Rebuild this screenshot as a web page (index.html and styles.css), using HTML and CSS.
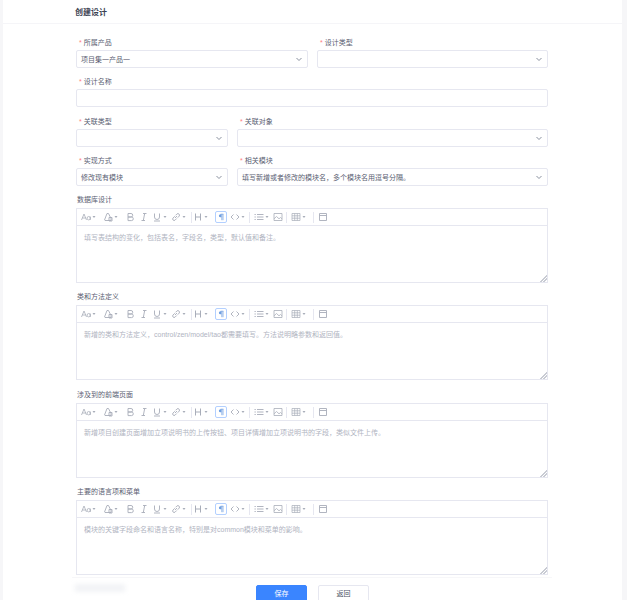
FILE: index.html
```html
<!DOCTYPE html>
<html lang="zh-CN">
<head>
    <meta charset="UTF-8">
    <meta name="viewport" content="width=device-width, initial-scale=1.0">
    <title>创建设计</title>
    <link rel="stylesheet" href="styles.css">
</head>
<body>
    <svg class="icon-defs" width="0" height="0">
        <symbol id="i-chevron" viewBox="0 0 8 8"><path d="M1.500 3 4 5.500 6.500 3" fill="none" stroke="currentColor" stroke-width=".9"/></symbol>
        <symbol id="i-caret" viewBox="0 0 6 6"><path d="M1.500 2 4.500 2 3 4Z" fill="currentColor"/></symbol>
        <symbol id="i-font" viewBox="0 0 10 10"><path d="M.5 8 3 2 5.500 8M1.400 6H4.600M9.300 4.500V8M9.300 6.200a1.600 1.700 0 1 1-3.200 0 1.600 1.700 0 1 1 3.200 0" fill="none" stroke="currentColor" stroke-width=".8"/></symbol>
        <symbol id="i-color" viewBox="0 0 10 10"><path d="M1.500 8 4 1.500h1.500L8 6.500V8.500H2ZM6 5.500h3v3.500H6Z" fill="none" stroke="currentColor" stroke-width=".9"/></symbol>
        <symbol id="i-bold" viewBox="0 0 10 10"><path d="M3 1.500H6a1.700 1.700 0 0 1 0 3.500H3ZM3 5H6.500a1.800 1.800 0 0 1 0 3.600H3Z" fill="none" stroke="currentColor" stroke-width=".9"/></symbol>
        <symbol id="i-italic" viewBox="0 0 10 10"><path d="M4 1.500H7.500M2.500 8.500H6M5.700 1.500 4.300 8.500" fill="none" stroke="currentColor" stroke-width=".9"/></symbol>
        <symbol id="i-under" viewBox="0 0 10 10"><path d="M2.500 1.500V5a2.500 2.500 0 0 0 5 0V1.500M2 9H8" fill="none" stroke="currentColor" stroke-width=".9"/></symbol>
        <symbol id="i-link" viewBox="0 0 10 10"><path d="M4 6 6 4M3.800 4.300 2 6a1.500 1.500 0 0 0 2 2.200L5.700 6.500M4.600 3.300 6 1.900A1.600 1.600 0 0 1 8.300 4L6.700 5.700" fill="none" stroke="currentColor" stroke-width=".9"/></symbol>
        <symbol id="i-head" viewBox="0 0 10 10"><path d="M2.500 1.500V8.500M7.500 1.500V8.500M2.500 5H7.500" fill="none" stroke="currentColor" stroke-width="1"/></symbol>
        <symbol id="i-para" viewBox="0 0 10 10"><path d="M4.500 1.500H8M6 1.500V9M7.500 1.500V9" fill="none" stroke="currentColor" stroke-width=".9"/><path d="M5.500 1.500H4.300a1.900 1.900 0 0 0 0 3.900H5.500Z" fill="currentColor"/></symbol>
        <symbol id="i-code" viewBox="0 0 10 10"><path d="M3.500 2.500 1 5 3.500 7.500M6.500 2.500 9 5 6.500 7.500" fill="none" stroke="currentColor" stroke-width=".9"/></symbol>
        <symbol id="i-list" viewBox="0 0 10 10"><path d="M3 2.500H9.500M3 5H9.500M3 7.500H9.500M.5 2.500H1.800M.5 5H1.800M.5 7.500H1.800" fill="none" stroke="currentColor" stroke-width=".9"/></symbol>
        <symbol id="i-image" viewBox="0 0 10 10"><path d="M1 1.500H9V8.500H1ZM1 6.800 3.500 4.500 6 6.800 7.500 5.500 9 6.800" fill="none" stroke="currentColor" stroke-width=".8"/></symbol>
        <symbol id="i-table" viewBox="0 0 10 10"><path d="M1 1.500H9V8.500H1ZM1 3.800H9M1 6.200H9M3.700 1.500V8.500M6.300 1.500V8.500" fill="none" stroke="currentColor" stroke-width=".7"/></symbol>
        <symbol id="i-date" viewBox="0 0 10 10"><path d="M1.500 1.500H8.500V8.500H1.500ZM1.500 3.500H8.500" fill="none" stroke="currentColor" stroke-width=".9"/></symbol>
    </svg>

    <div class="panel">
        <div class="panel-head">
            <h1>创建设计</h1>
        </div>
        <form class="form">
            <div class="row row-wide">
                <div class="field">
                    <label class="label required">所属产品</label>
                    <div class="control">项目集一产品一<svg class="chevron"><use href="#i-chevron"/></svg></div>
                </div>
                <div class="field">
                    <label class="label required">设计类型</label>
                    <div class="control"><svg class="chevron"><use href="#i-chevron"/></svg></div>
                </div>
            </div>
            <div class="row row-name">
                <div class="field">
                    <label class="label required">设计名称</label>
                    <div class="control"></div>
                </div>
            </div>
            <div class="row row-split">
                <div class="field">
                    <label class="label required">关联类型</label>
                    <div class="control"><svg class="chevron"><use href="#i-chevron"/></svg></div>
                </div>
                <div class="field">
                    <label class="label required">关联对象</label>
                    <div class="control"><svg class="chevron"><use href="#i-chevron"/></svg></div>
                </div>
            </div>
            <div class="row row-split">
                <div class="field">
                    <label class="label required">实现方式</label>
                    <div class="control">修改现有模块<svg class="chevron"><use href="#i-chevron"/></svg></div>
                </div>
                <div class="field">
                    <label class="label required">相关模块</label>
                    <div class="control">填写新增或者修改的模块名，多个模块名用逗号分隔。<svg class="chevron"><use href="#i-chevron"/></svg></div>
                </div>
            </div>

            <div class="block">
                <label class="label">数据库设计</label>
                <div class="editor">
                    <div class="toolbar">
                        <span class="tool"><svg class="ico"><use href="#i-font"/></svg><svg class="caret"><use href="#i-caret"/></svg></span>
                        <span class="tool ml6"><svg class="ico"><use href="#i-color"/></svg><svg class="caret"><use href="#i-caret"/></svg></span>
                        <span class="tool ml6"><svg class="ico"><use href="#i-bold"/></svg></span>
                        <span class="tool ml4"><svg class="ico"><use href="#i-italic"/></svg></span>
                        <span class="tool ml3"><svg class="ico"><use href="#i-under"/></svg><svg class="caret"><use href="#i-caret"/></svg></span>
                        <span class="tool ml3"><svg class="ico"><use href="#i-link"/></svg><svg class="caret"><use href="#i-caret"/></svg></span>
                        <span class="sep ml4"></span>
                        <span class="tool ml1"><svg class="ico"><use href="#i-head"/></svg><svg class="caret"><use href="#i-caret"/></svg></span>
                        <span class="tool-active ml6"><svg class="ico"><use href="#i-para"/></svg></span>
                        <span class="tool ml3"><svg class="ico"><use href="#i-code"/></svg><svg class="caret"><use href="#i-caret"/></svg></span>
                        <span class="sep ml3"></span>
                        <span class="tool ml4"><svg class="ico"><use href="#i-list"/></svg><svg class="caret"><use href="#i-caret"/></svg></span>
                        <span class="tool ml3"><svg class="ico"><use href="#i-image"/></svg></span>
                        <span class="sep ml3"></span>
                        <span class="tool ml4"><svg class="ico"><use href="#i-table"/></svg><svg class="caret"><use href="#i-caret"/></svg></span>
                        <span class="sep ml6"></span>
                        <span class="tool ml4"><svg class="ico"><use href="#i-date"/></svg></span>
                    </div>
                    <div class="editor-body">填写表结构的变化，包括表名，字段名，类型，默认值和备注。</div>
                </div>
            </div>

            <div class="block block-wide">
                <label class="label">类和方法定义</label>
                <div class="editor">
                    <div class="toolbar">
                        <span class="tool"><svg class="ico"><use href="#i-font"/></svg><svg class="caret"><use href="#i-caret"/></svg></span>
                        <span class="tool ml6"><svg class="ico"><use href="#i-color"/></svg><svg class="caret"><use href="#i-caret"/></svg></span>
                        <span class="tool ml6"><svg class="ico"><use href="#i-bold"/></svg></span>
                        <span class="tool ml4"><svg class="ico"><use href="#i-italic"/></svg></span>
                        <span class="tool ml3"><svg class="ico"><use href="#i-under"/></svg><svg class="caret"><use href="#i-caret"/></svg></span>
                        <span class="tool ml3"><svg class="ico"><use href="#i-link"/></svg><svg class="caret"><use href="#i-caret"/></svg></span>
                        <span class="sep ml4"></span>
                        <span class="tool ml1"><svg class="ico"><use href="#i-head"/></svg><svg class="caret"><use href="#i-caret"/></svg></span>
                        <span class="tool-active ml6"><svg class="ico"><use href="#i-para"/></svg></span>
                        <span class="tool ml3"><svg class="ico"><use href="#i-code"/></svg><svg class="caret"><use href="#i-caret"/></svg></span>
                        <span class="sep ml3"></span>
                        <span class="tool ml4"><svg class="ico"><use href="#i-list"/></svg><svg class="caret"><use href="#i-caret"/></svg></span>
                        <span class="tool ml3"><svg class="ico"><use href="#i-image"/></svg></span>
                        <span class="sep ml3"></span>
                        <span class="tool ml4"><svg class="ico"><use href="#i-table"/></svg><svg class="caret"><use href="#i-caret"/></svg></span>
                        <span class="sep ml6"></span>
                        <span class="tool ml4"><svg class="ico"><use href="#i-date"/></svg></span>
                    </div>
                    <div class="editor-body">新增的类和方法定义，control/zen/model/tao都需要填写。方法说明略参数和返回值。</div>
                </div>
            </div>

            <div class="block">
                <label class="label">涉及到的前端页面</label>
                <div class="editor">
                    <div class="toolbar">
                        <span class="tool"><svg class="ico"><use href="#i-font"/></svg><svg class="caret"><use href="#i-caret"/></svg></span>
                        <span class="tool ml6"><svg class="ico"><use href="#i-color"/></svg><svg class="caret"><use href="#i-caret"/></svg></span>
                        <span class="tool ml6"><svg class="ico"><use href="#i-bold"/></svg></span>
                        <span class="tool ml4"><svg class="ico"><use href="#i-italic"/></svg></span>
                        <span class="tool ml3"><svg class="ico"><use href="#i-under"/></svg><svg class="caret"><use href="#i-caret"/></svg></span>
                        <span class="tool ml3"><svg class="ico"><use href="#i-link"/></svg><svg class="caret"><use href="#i-caret"/></svg></span>
                        <span class="sep ml4"></span>
                        <span class="tool ml1"><svg class="ico"><use href="#i-head"/></svg><svg class="caret"><use href="#i-caret"/></svg></span>
                        <span class="tool-active ml6"><svg class="ico"><use href="#i-para"/></svg></span>
                        <span class="tool ml3"><svg class="ico"><use href="#i-code"/></svg><svg class="caret"><use href="#i-caret"/></svg></span>
                        <span class="sep ml3"></span>
                        <span class="tool ml4"><svg class="ico"><use href="#i-list"/></svg><svg class="caret"><use href="#i-caret"/></svg></span>
                        <span class="tool ml3"><svg class="ico"><use href="#i-image"/></svg></span>
                        <span class="sep ml3"></span>
                        <span class="tool ml4"><svg class="ico"><use href="#i-table"/></svg><svg class="caret"><use href="#i-caret"/></svg></span>
                        <span class="sep ml6"></span>
                        <span class="tool ml4"><svg class="ico"><use href="#i-date"/></svg></span>
                    </div>
                    <div class="editor-body">新增项目创建页面增加立项说明书的上传按钮、项目详情增加立项说明书的字段，类似文件上传。</div>
                </div>
            </div>

            <div class="block">
                <label class="label">主要的语言项和菜单</label>
                <div class="editor">
                    <div class="toolbar">
                        <span class="tool"><svg class="ico"><use href="#i-font"/></svg><svg class="caret"><use href="#i-caret"/></svg></span>
                        <span class="tool ml6"><svg class="ico"><use href="#i-color"/></svg><svg class="caret"><use href="#i-caret"/></svg></span>
                        <span class="tool ml6"><svg class="ico"><use href="#i-bold"/></svg></span>
                        <span class="tool ml4"><svg class="ico"><use href="#i-italic"/></svg></span>
                        <span class="tool ml3"><svg class="ico"><use href="#i-under"/></svg><svg class="caret"><use href="#i-caret"/></svg></span>
                        <span class="tool ml3"><svg class="ico"><use href="#i-link"/></svg><svg class="caret"><use href="#i-caret"/></svg></span>
                        <span class="sep ml4"></span>
                        <span class="tool ml1"><svg class="ico"><use href="#i-head"/></svg><svg class="caret"><use href="#i-caret"/></svg></span>
                        <span class="tool-active ml6"><svg class="ico"><use href="#i-para"/></svg></span>
                        <span class="tool ml3"><svg class="ico"><use href="#i-code"/></svg><svg class="caret"><use href="#i-caret"/></svg></span>
                        <span class="sep ml3"></span>
                        <span class="tool ml4"><svg class="ico"><use href="#i-list"/></svg><svg class="caret"><use href="#i-caret"/></svg></span>
                        <span class="tool ml3"><svg class="ico"><use href="#i-image"/></svg></span>
                        <span class="sep ml3"></span>
                        <span class="tool ml4"><svg class="ico"><use href="#i-table"/></svg><svg class="caret"><use href="#i-caret"/></svg></span>
                        <span class="sep ml6"></span>
                        <span class="tool ml4"><svg class="ico"><use href="#i-date"/></svg></span>
                    </div>
                    <div class="editor-body">模块的关键字段命名和语言名称，特别是对common模块和菜单的影响。</div>
                </div>
            </div>

            <div class="footer">
                <span class="ghost"></span>
                <div class="actions">
                    <span class="btn btn-primary">保存</span>
                    <span class="btn">返回</span>
                </div>
            </div>
        </form>
    </div>
</body>
</html>
```

FILE: styles.css
```css
/* page */
html, body {
    height: 600px;
    overflow: hidden;
}

body {
    margin: 0;
    background-color: #f6f6f8;
    color: #4a5163;
    font-family: "Liberation Sans", "Noto Sans CJK SC", sans-serif;
    font-size: 7px;
}

.icon-defs {
    display: block;
    height: 0;
}

.panel {
    margin: 0 5px 0 3px;
    height: 600px;
    background-color: #fff;
}

.panel-head {
    height: 24px;
    padding-left: 72px;
    border-bottom: 1px solid #f5f5f8;
    box-sizing: border-box;
    display: flex;
    align-items: center;
}

.panel-head h1 {
    margin: 0;
    font-size: 8px;
    font-weight: 700;
    color: #3c4353;
}

/* form */
.form {
    padding: 12px 74px 0 73px;
}

.row {
    display: grid;
    gap: 9px;
    margin-bottom: 7px;
}

.row-wide {
    grid-template-columns: 232px 231px;
}

.row-split {
    grid-template-columns: 152px 311px;
}

.row-name {
    margin-bottom: 8px;
}

.label {
    display: block;
    height: 14px;
    line-height: 14px;
    padding-left: 1px;
    color: #5a6072;
}

.required::before {
    content: "*";
    color: #ff8080;
    margin: 0 2px;
}

.control {
    height: 18px;
    padding: 0 4px;
    display: flex;
    align-items: center;
    justify-content: space-between;
    box-sizing: border-box;
    background-color: #fff;
    border: 1px solid #e6e7f0;
    border-radius: 2px;
    color: #5a6072;
}

.chevron {
    width: 8px;
    height: 8px;
    margin-left: auto;
    color: #7d8494;
}

/* editors */
.block {
    margin-bottom: 7px;
}

.block-wide {
    margin-bottom: 8px;
}

.block .label {
    height: 15px;
}

.editor {
    height: 75px;
    box-sizing: border-box;
    border: 1px solid #e6e7f0;
    background-color: #fff;
    display: flex;
    flex-direction: column;
}

.toolbar {
    height: 17px;
    flex: none;
    box-sizing: border-box;
    border-bottom: 1px solid #e6e7f0;
    padding-left: 4px;
    display: flex;
    align-items: center;
    color: #a8adb9;
}

.tool {
    display: flex;
    align-items: center;
}

.ico {
    width: 10px;
    height: 10px;
}

.caret {
    width: 6px;
    height: 6px;
}

.sep {
    width: 1px;
    height: 11px;
    background-color: #e6e7f0;
}

.tool-active {
    width: 12px;
    height: 12px;
    box-sizing: border-box;
    display: flex;
    align-items: center;
    justify-content: center;
    border: 1px solid #b3d0ff;
    border-radius: 2px;
    color: #6f9fe0;
}

.tool-active .ico {
    width: 8px;
    height: 8px;
}

.ml1 { margin-left: 1px; }
.ml3 { margin-left: 3px; }
.ml4 { margin-left: 4px; }
.ml6 { margin-left: 6px; }

.editor-body {
    flex: 1;
    padding: 6px 7px;
    line-height: 11px;
    color: #b0b4bf;
    background: linear-gradient(135deg, transparent 0 calc(100% - 5px), #c8cbd3 calc(100% - 5px) calc(100% - 4px), transparent calc(100% - 4px) calc(100% - 3px), #c8cbd3 calc(100% - 3px) calc(100% - 2px), transparent calc(100% - 2px));
}

/* footer */
.footer {
    margin: -5px -4px 0 -4px;
    padding-top: 7px;
    border-top: 1px solid #f7f7f9;
    display: flex;
}

.ghost {
    width: 50px;
    height: 8px;
    margin: -1px 0 0 3px;
    background-color: #f2f3f6;
    filter: blur(2px);
}

.actions {
    display: flex;
    gap: 11px;
    margin-left: 131px;
}

.btn {
    width: 51px;
    height: 18px;
    line-height: 16px;
    box-sizing: border-box;
    text-align: center;
    border: 1px solid #e6e7f0;
    border-radius: 2px;
    background-color: #fff;
}

.btn-primary {
    background-color: #3a85ff;
    border-color: #3a85ff;
    color: #fff;
}
```
